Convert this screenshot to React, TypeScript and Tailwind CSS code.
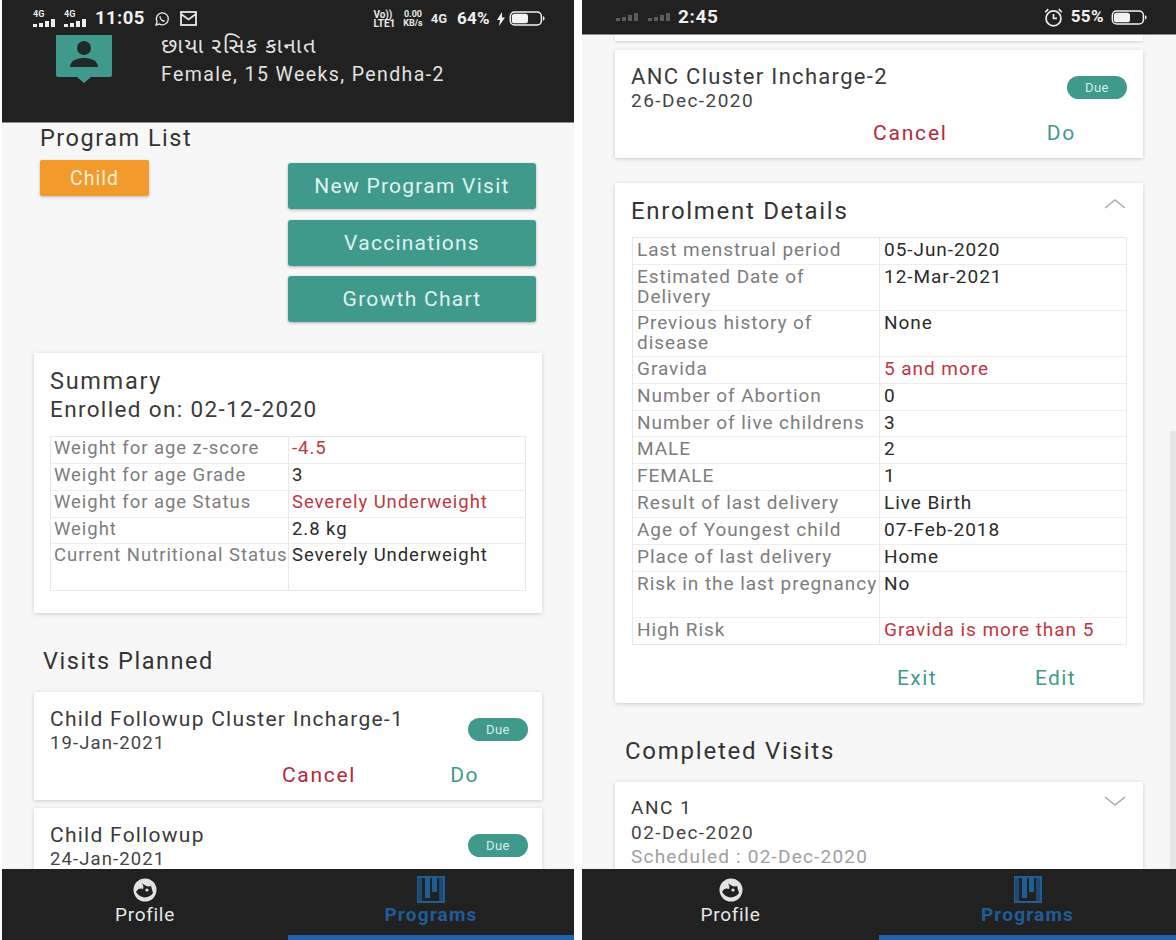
import React from "react";

const font = { fontFamily: '"Roboto","Noto Sans Gujarati","Noto Sans","Liberation Sans",sans-serif' };

function Row({ k, v, h, red, wide }: { k: string; v?: string; h: string; red?: boolean; wide?: boolean }) {
  const type = wide ? "pl-[4px] pt-[2px] text-[19px] leading-[20px] tracking-[0.95px]" : "pl-[3px] pt-[1px] text-[18.5px] leading-[20px] tracking-[0.95px]";
  return (
    <div className={`flex border-b border-[#eeeeee] last:border-b-0 ${h}`}>
      <div className={`${wide ? "w-[247px]" : "w-[238px]"} shrink-0 border-r border-[#e8e8e8] text-[#7d7d7d] ${type}`}>{k}</div>
      <div className={`flex-1 whitespace-nowrap ${type} ${red ? "text-[#c0363f]" : "text-[#2b2b2b]"}`}>{v}</div>
    </div>
  );
}

function Due({ className }: { className: string }) {
  return (
    <div className={`absolute flex h-[23px] w-[60px] items-center justify-center rounded-full bg-[#3f9a8c] text-[13px] tracking-[0.4px] text-[#d5eee9] ${className}`}>Due</div>
  );
}

function Battery({ pct }: { pct: number }) {
  return (
    <svg width="38" height="15" viewBox="0 0 34 14">
      <rect x="0.5" y="1" width="29" height="12" rx="4" fill="none" stroke="#f2f2f2" strokeWidth="1.4" />
      <rect x="2" y="2.5" width={pct} height="9" rx="2.5" fill="#f2f2f2" />
      <path d="M31 5 C33 5.5 33 8.5 31 9 Z" fill="#f2f2f2" />
    </svg>
  );
}

function Signal({ dim }: { dim?: boolean }) {
  const c = dim ? "#5c5c5c" : "#eeeeee";
  return (
    <svg width="24" height="8" viewBox="0 0 24 8">
      <rect x="0" y="5" width="4" height="3" fill={c} />
      <rect x="6" y="4" width="4" height="4" fill={c} />
      <rect x="12" y="2" width="4" height="6" fill={c} />
      <rect x="18" y="0" width="4" height="8" fill={c} />
    </svg>
  );
}

function Net() {
  return (
    <div className="flex flex-col items-start">
      <span className="text-[9px] leading-[9px] font-bold text-[#e8e8e8]">4G</span>
      <Signal />
    </div>
  );
}

function Nav({ underline }: { underline: string }) {
  return (
    <div className="relative flex h-[71px] shrink-0 bg-[#212121]">
      <div className="flex w-1/2 flex-col items-center pt-[9px]">
        <svg width="24" height="24" viewBox="0 0 24 24">
          <circle cx="12" cy="12" r="11.5" fill="#e2e2e2" />
          <path d="M3 14 C5 10 8 10 10 11 C11 9 10 7 9 5 C12 8 15 9 18 8 L20 15 C16 21 7 21 3 14 Z" fill="#212121" />
          <circle cx="14" cy="12" r="1.6" fill="#e2e2e2" />
        </svg>
        <span className="mt-[2px] text-[19px] leading-[22px] tracking-[0.7px] text-[#e6e6e6]">Profile</span>
      </div>
      <div className="flex w-1/2 flex-col items-center pt-[7px]">
        <svg width="28" height="27" viewBox="0 0 28 27">
          <rect x="1" y="1" width="26" height="25" fill="none" stroke="#1f5d96" strokeWidth="2" />
          <rect x="8" y="2" width="5" height="20" fill="#1f5d96" />
          <rect x="15" y="2" width="5" height="14" fill="#1f5d96" />
          <rect x="1" y="2" width="4" height="23" fill="#1c4a73" />
          <rect x="22" y="2" width="4" height="23" fill="#1c4a73" />
        </svg>
        <span className="mt-[1px] text-[19px] leading-[22px] font-bold tracking-[1.2px] text-[#1f5d96]">Programs</span>
      </div>
      <div className={`absolute bottom-0 right-0 h-[5px] bg-[#1d64ad] ${underline}`} />
    </div>
  );
}

function ActionCard({ title, date, cls, titleCls, dateCls, actions }: { title: string; date: string; cls: string; titleCls: string; dateCls: string; actions?: React.ReactNode }) {
  return (
    <div className={`relative bg-white pl-[16px] shadow-[0_1px_4px_rgba(0,0,0,0.18)] ${cls}`}>
      <div className={`leading-[26px] text-[#3a3a3a] ${titleCls}`}>{title}</div>
      <div className={`leading-[22px] text-[#444] ${dateCls}`}>{date}</div>
      {actions}
    </div>
  );
}

function TealButton({ label }: { label: string }) {
  return (
    <div className="flex h-[46px] w-[248px] items-center justify-center rounded-[3px] bg-[#3f9a8c] pt-[2px] text-[21px] tracking-[1.25px] text-[#dff3ef] shadow-[0_1px_3px_rgba(0,0,0,0.3)]">{label}</div>
  );
}

export default function App() {
  return (
    <div className="flex h-[940px] w-[1176px] overflow-hidden bg-white" style={font}>
      {/* left phone */}
      <div className="ml-[2px] flex h-[940px] w-[572px] flex-col">
        <div className="h-[123px] shrink-0 border-b border-[#8c8c8c] bg-[#212121]">
          <div className="flex h-[34px] items-center pl-[31px] pr-[27px] pt-[3px]">
            <div className="flex items-center gap-[7px]">
              <Net />
              <Net />
            </div>
            <span className="ml-[7px] text-[18.5px] font-bold tracking-[0.4px] text-[#f0f0f0]">11:05</span>
            <svg className="ml-[9px]" width="16" height="16" viewBox="0 0 24 24" fill="none" stroke="#e8e8e8" strokeWidth="2">
              <path d="M3 21l1.6-5A9 9 0 1 1 8 19.5L3 21z" />
              <path d="M9 8c0 4 3 7 7 7" />
            </svg>
            <svg className="ml-[10px]" width="17" height="15" viewBox="0 0 17 15" fill="none" stroke="#e8e8e8" strokeWidth="1.8">
              <rect x="1" y="1" width="15" height="13" />
              <path d="M1 3l7.5 5.5L16 3" />
            </svg>
            <span className="ml-auto text-[10px] leading-[9px] font-bold text-[#e8e8e8]">Vo))<br />LTE1</span>
            <span className="ml-[8px] text-center text-[9px] leading-[9px] font-bold text-[#e8e8e8]">0.00<br />KB/s</span>
            <span className="ml-[8px] text-[13px] font-bold text-[#e8e8e8]">4G</span>
            <span className="ml-[10px] text-[17px] font-bold tracking-[0.3px] text-[#f0f0f0]">64%</span>
            <svg className="ml-[6px]" width="10" height="14" viewBox="0 0 10 14">
              <path d="M6 0 1 8h3l-1 6 6-8.5H6Z" fill="#f0f0f0" />
            </svg>
            <div className="ml-[3px] flex">
              <Battery pct={15} />
            </div>
          </div>
          <div className="flex pl-[54px]">
            <svg className="mt-[1px]" width="56" height="50" viewBox="0 0 56 50">
              <path d="M2 0H54a2 2 0 0 1 2 2V42a2 2 0 0 1-2 2H35l-7 6-7-6H2a2 2 0 0 1-2-2V2a2 2 0 0 1 2-2Z" fill="#3f9a8c" transform="translate(0 -2)" />
              <circle cx="28" cy="13" r="7" fill="#1f2a28" />
              <path d="M14 32c0-7 8-9 14-9s14 2 14 9Z" fill="#1f2a28" />
            </svg>
            <div className="pl-[49px]">
              <div className="whitespace-nowrap pt-[1px] text-[22px] leading-[22px] tracking-[1.4px] text-[#e2e2e2]">છાયા રસિક કાનાત</div>
              <div className="mt-[6px] whitespace-nowrap text-[19.5px] leading-[24px] tracking-[1.4px] text-[#e2e2e2]">Female, 15 Weeks, Pendha-2</div>
            </div>
          </div>
        </div>
        <div className="min-h-0 flex-1 overflow-hidden bg-[#f7f7f7]">
          <div className="pl-[38px] pt-[2px] text-[23.5px] leading-[26px] tracking-[1.5px] text-[#333]">Program List</div>
          <div className="flex pl-[38px] pt-[9px]">
            <div className="flex h-[36px] w-[109px] items-center justify-center rounded-[2px] bg-[#f39a2c] pt-[2px] text-[19.5px] tracking-[1px] text-[#fff0dc] shadow-[0_1px_3px_rgba(0,0,0,0.25)]">Child</div>
            <div className="ml-[139px] mt-[3px] flex flex-col gap-[10.5px]">
              <TealButton label="New Program Visit" />
              <TealButton label="Vaccinations" />
              <TealButton label="Growth Chart" />
            </div>
          </div>
          <div className="mx-[32px] mt-[31px] h-[260px] bg-white px-[16px] pt-[15px] shadow-[0_1px_4px_rgba(0,0,0,0.18)]">
            <div className="text-[23.5px] leading-[26px] tracking-[1.7px] text-[#3a3a3a]">Summary</div>
            <div className="mt-[1px] whitespace-nowrap text-[22.5px] leading-[28px] tracking-[1.35px] text-[#3a3a3a]">Enrolled on: 02-12-2020</div>
            <div className="mt-[13px] border border-[#e8e8e8]">
              <Row h="h-[27px]" k="Weight for age z-score" v="-4.5" red />
              <Row h="h-[27px]" k="Weight for age Grade" v="3" />
              <Row h="h-[27px]" k="Weight for age Status" v="Severely Underweight" red />
              <Row h="h-[26px]" k="Weight" v="2.8 kg" />
              <Row h="h-[46px]" k="Current Nutritional Status" v="Severely Underweight" />
            </div>
          </div>
          <div className="pl-[41px] pt-[34px] text-[23.5px] leading-[28px] tracking-[1.55px] text-[#333]">Visits Planned</div>
          <ActionCard
            cls="mx-[32px] mt-[17px] h-[108px] pt-[14px]"
            titleCls="whitespace-nowrap text-[21px] tracking-[1.25px]"
            dateCls="text-[18.5px] tracking-[1.1px]"
            title="Child Followup Cluster Incharge-1"
            date="19-Jan-2021"
            actions={
              <div className="flex pt-[8px] text-[21px] leading-[26px] tracking-[1.7px]">
                <span className="ml-[232px] text-[#b5283a]">Cancel</span>
                <span className="ml-[94px] text-[#3f9a8c]">Do</span>
              </div>
            }
          />
          <div className="relative">
            <ActionCard
              cls="mx-[32px] mt-[8px] h-[108px] pt-[14px]"
              titleCls="text-[21px] tracking-[1.25px]"
              dateCls="text-[18.5px] tracking-[1.1px]"
              title="Child Followup"
              date="24-Jan-2021"
            />
            <Due className="left-[466px] top-[26px]" />
            <Due className="left-[466px] top-[-90px]" />
          </div>
        </div>
        <Nav underline="w-[286px]" />
      </div>

      {/* right phone */}
      <div className="ml-[8px] flex h-[940px] w-[594px] flex-col">
        <div className="flex h-[35px] shrink-0 items-center border-b border-[#8c8c8c] bg-[#212121] pl-[34px] pr-[27px]">
          <div className="flex items-center gap-[8px]">
            <Signal dim />
            <Signal dim />
          </div>
          <span className="ml-[6px] text-[19px] font-bold tracking-[0.6px] text-[#f0f0f0]">2:45</span>
          <svg className="ml-auto" width="21" height="21" viewBox="0 0 24 24" fill="none" stroke="#e8e8e8" strokeWidth="2">
            <circle cx="12" cy="13" r="8.5" />
            <path d="M12 8v5h4M2.5 6 6 2.5M21.5 6 18 2.5" />
          </svg>
          <span className="ml-[7px] text-[17px] font-bold tracking-[0.4px] text-[#f0f0f0]">55%</span>
          <div className="ml-[7px] flex">
            <Battery pct={15} />
          </div>
        </div>
        <div className="relative min-h-0 flex-1 overflow-hidden bg-[#f7f7f7]">
          <div className="mx-[33px] h-[6px] bg-white shadow-[0_1px_3px_rgba(0,0,0,0.15)]" />
          <ActionCard
            cls="mx-[33px] mt-[9px] h-[108px] pt-[14px]"
            titleCls="whitespace-nowrap text-[22px] tracking-[1.3px]"
            dateCls="text-[19px] tracking-[1.45px]"
            title="ANC Cluster Incharge-2"
            date="26-Dec-2020"
            actions={
              <div className="flex pt-[8px] text-[21px] leading-[26px] tracking-[1.8px]">
                <span className="ml-[242px] text-[#b5283a]">Cancel</span>
                <span className="ml-[99px] text-[#3f9a8c]">Do</span>
              </div>
            }
          />
          <Due className="left-[485px] top-[41px]" />
          <div className="relative mx-[33px] mt-[25px] h-[520px] bg-white pt-[15px] shadow-[0_1px_4px_rgba(0,0,0,0.18)]">
            <svg className="absolute right-[17px] top-[15px]" width="22" height="11" viewBox="0 0 22 11" fill="none" stroke="#a8a8a8" strokeWidth="1.4">
              <path d="M1 10 11 2l10 8" />
            </svg>
            <div className="pl-[16px] text-[24px] leading-[26px] tracking-[1.7px] text-[#333]">Enrolment Details</div>
            <div className="ml-[17px] mr-[16px] mt-[13px] border border-[#e8e8e8]">
              <Row wide h="h-[27px]" k="Last menstrual period" v="05-Jun-2020" />
              <Row wide h="h-[46px]" k="Estimated Date of Delivery" v="12-Mar-2021" />
              <Row wide h="h-[46px]" k="Previous history of disease" v="None" />
              <Row wide h="h-[27px]" k="Gravida" v="5 and more" red />
              <Row wide h="h-[27px]" k="Number of Abortion" v="0" />
              <Row wide h="h-[26px]" k="Number of live childrens" v="3" />
              <Row wide h="h-[27px]" k="MALE" v="2" />
              <Row wide h="h-[27px]" k="FEMALE" v="1" />
              <Row wide h="h-[27px]" k="Result of last delivery" v="Live Birth" />
              <Row wide h="h-[27px]" k="Age of Youngest child" v="07-Feb-2018" />
              <Row wide h="h-[27px]" k="Place of last delivery" v="Home" />
              <Row wide h="h-[46px]" k="Risk in the last pregnancy" v="No" />
              <Row wide h="h-[26px]" k="High Risk" v="Gravida is more than 5" red />
            </div>
            <div className="flex pt-[20px] text-[21px] leading-[26px] tracking-[1.4px] text-[#3f9a8c]">
              <span className="ml-[282px]">Exit</span>
              <span className="ml-[98px]">Edit</span>
            </div>
          </div>
          <div className="pl-[43px] pt-[34px] text-[24px] leading-[28px] tracking-[1.75px] text-[#333]">Completed Visits</div>
          <div className="relative mx-[33px] mt-[17px] h-[110px] bg-white pl-[16px] pt-[13px] shadow-[0_1px_4px_rgba(0,0,0,0.18)]">
            <svg className="absolute right-[17px] top-[14px]" width="22" height="11" viewBox="0 0 22 11" fill="none" stroke="#a8a8a8" strokeWidth="1.4">
              <path d="M1 1l10 8 10-8" />
            </svg>
            <div className="text-[19px] leading-[25px] tracking-[1.5px] text-[#3a3a3a]">ANC 1</div>
            <div className="text-[19px] leading-[25px] tracking-[1.45px] text-[#444]">02-Dec-2020</div>
            <div className="whitespace-nowrap text-[19px] leading-[24px] tracking-[1.2px] text-[#a0a0a0]">Scheduled : 02-Dec-2020</div>
          </div>
          <div className="absolute right-0 top-[396px] h-[440px] w-[6px] bg-[#e6e6e6]" />
        </div>
        <Nav underline="w-[297px]" />
      </div>
    </div>
  );
}
